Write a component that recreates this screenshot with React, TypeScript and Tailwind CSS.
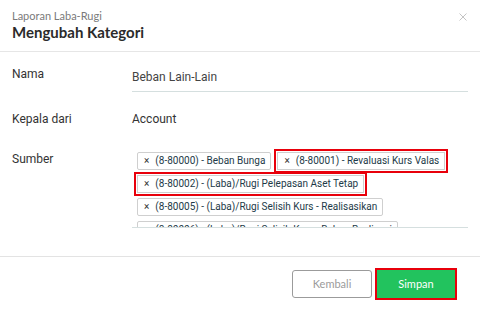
import React from 'react';

const tags = [
  { code: '8-80000', name: 'Beban Bunga', marked: false },
  { code: '8-80001', name: 'Revaluasi Kurs Valas', marked: true },
  { code: '8-80002', name: '(Laba)/Rugi Pelepasan Aset Tetap', marked: true },
  { code: '8-80005', name: '(Laba)/Rugi Selisih Kurs - Realisasikan', marked: false },
  { code: '8-80006', name: '(Laba)/Rugi Selisih Kurs - Belum Realisasi', marked: false },
];

const Tag: React.FC<{ code: string; name: string; marked: boolean }> = ({ code, name, marked }) => (
  <div
    className={`flex h-[18px] items-center border border-[#cfcfcf] bg-white pl-[6px] pr-[5px] text-[10px] leading-none text-[#1d3a48] ${
      marked ? 'outline-2 outline-offset-[1px] outline-[#e8000b]' : 'rounded-[2px]'
    }`}
  >
    <span className="mr-[6px] text-[10px] text-[#333]">×</span>
    <span>
      ({code}) - {name}
    </span>
  </div>
);

export default function App() {
  return (
    <div className="flex h-[309px] w-[480px] flex-col bg-white font-['Roboto',sans-serif]">
      {/* header */}
      <div className="relative h-[52px] shrink-0 border-b border-[#e6e6e6] px-3 pt-[9px] font-['Lato',sans-serif]">
        <div className="text-[11px] leading-[14px] text-[#7a7a7a]">Laporan Laba-Rugi</div>
        <div className="text-[15px] font-bold leading-[18px] text-[#2b2b2b]">Mengubah Kategori</div>
        <svg className="absolute right-[13px] top-[13px]" width="8" height="8" viewBox="0 0 8 8">
          <path d="M0.5 0.5 L7.5 7.5 M7.5 0.5 L0.5 7.5" stroke="#c4c4c4" strokeWidth="1" />
        </svg>
      </div>

      {/* body */}
      <div className="flex-1 pr-3 text-[12px] text-[#333]">
        <div className="flex pt-[13px]">
          <div className="w-[132px] shrink-0 pl-3 pt-[1px] leading-[16px]">Nama</div>
          <div className="flex-1 border-b border-[#d5dfdf] pb-[6px] pt-[4px] leading-[16px] text-[#444]">
            Beban Lain-Lain
          </div>
        </div>
        <div className="flex pt-[19px]">
          <div className="w-[132px] shrink-0 pl-3 leading-[16px]">Kepala dari</div>
          <div className="flex-1 leading-[16px]">Account</div>
        </div>
        <div className="flex pt-[21px]">
          <div className="w-[132px] shrink-0 pl-3 pt-[3px] leading-[16px]">Sumber</div>
          <div className="h-[80px] flex-1 overflow-hidden border-b border-[#d5dfdf] pl-[5px]">
            <div className="flex flex-wrap gap-x-[6px] gap-y-[5px] pt-[4px]">
              {tags.map((t) => (
                <Tag key={t.code} {...t} />
              ))}
            </div>
          </div>
        </div>
      </div>

      {/* footer */}
      <div className="flex h-[53px] shrink-0 items-center justify-end gap-[3px] border-t border-[#e3e3e3] pr-[23px] pt-[2px] font-['Lato',sans-serif] text-[11px]">
        <button className="h-[28px] w-[80px] rounded-[3px] border border-[#9b9b9b] bg-white text-[#9b9b9b]">
          Kembali
        </button>
        <button className="h-[32px] w-[82px] border-2 border-[#e8000b] bg-[#22c35e] text-white">Simpan</button>
      </div>
    </div>
  );
}
